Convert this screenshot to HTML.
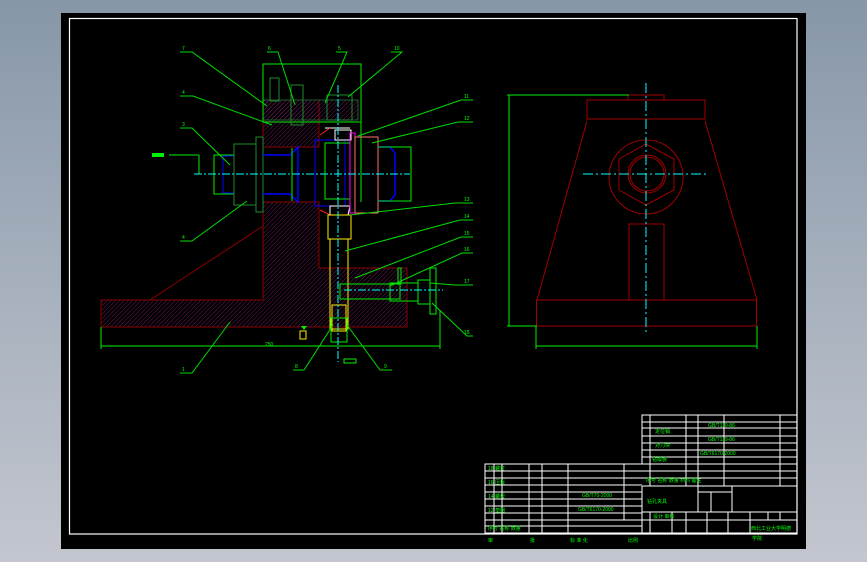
<!DOCTYPE html>
<html><head><meta charset="utf-8"><style>
html,body{margin:0;padding:0;}
body{width:867px;height:562px;overflow:hidden;background:linear-gradient(180deg,#8797a8 0%,#a6b0bd 50%,#c3c6ce 100%);}
svg{position:absolute;left:0;top:0;}
text{font-family:"Liberation Sans","Noto Sans CJK SC",sans-serif;fill:#00ff00;font-size:5px;}
</style></head><body>
<svg width="867" height="562" viewBox="0 0 867 562">
<defs>
<pattern id="h" width="3" height="3" patternUnits="userSpaceOnUse" patternTransform="rotate(45)">
<line x1="0" y1="0" x2="0" y2="3" stroke="#6a1a5a" stroke-width="1"/></pattern>
</defs>
<rect x="61" y="13" width="745" height="536" fill="#000"/>
<rect x="69.5" y="18.5" width="727.5" height="515.5" fill="none" stroke="#fff" stroke-width="1.2"/>

<!-- LEFT VIEW -->
<g fill="none" stroke-width="1">
<!-- hatched body -->
<path d="M101,300 H263 V202 H319 V268 H407 V327 H101 Z" fill="url(#h)" stroke="#8a0000"/>
<rect x="263" y="100" width="56" height="47" fill="url(#h)" stroke="#8a0000"/>
<rect x="263" y="100" width="95" height="20" fill="url(#h)" stroke="#1f5a2f"/>
<line x1="150" y1="300" x2="263" y2="226" stroke="#8a0000"/>
<line x1="263" y1="147" x2="319" y2="147" stroke="#8a0000"/>
<!-- green outline top -->
<rect x="263" y="64" width="98" height="58" stroke="#00ee00"/>
<line x1="361" y1="64" x2="361" y2="202" stroke="#00ee00"/>
<!-- left shaft parts -->
<rect x="214" y="155" width="20" height="39" stroke="#00ee00"/>
<rect x="223" y="156" width="11" height="37" stroke="#0000ff"/>
<rect x="234" y="144" width="22" height="61" stroke="#1f8a2f"/>
<rect x="256" y="137" width="7" height="75" stroke="#1f8a2f"/>
<path d="M263,155 H290 L298,147 V202 L290,194 H263" stroke="#0000ff" stroke-width="1.5"/>
<line x1="292" y1="148" x2="292" y2="201" stroke="#00ee00"/>
<path d="M315,140 H345 V206 H315 Z" stroke="#0000ff"/>
<rect x="325" y="143" width="25" height="56" stroke="#00ee00"/>
<path d="M335,130 H351 V140 H335 Z M325,128 H350" stroke="#ffffff"/>
<path d="M330,206 H350 L348,215 H330 Z" stroke="#ffffff"/>
<path d="M320,135 L330,128 M320,210 L330,215" stroke="#ff2020"/>
<rect x="350" y="133" width="5" height="80" stroke="#ff00ff"/>
<rect x="355" y="137" width="23" height="76" stroke="#ff7070"/>
<path d="M378,147 H390 L395,153 V195 L390,201 H378" stroke="#0000ff" stroke-width="1.5"/>
<path d="M378,147 H411 V201 H378" stroke="#00ee00"/>
<!-- vertical yellow stem -->
<rect x="328" y="215" width="23" height="24" stroke="#ffee00"/>
<rect x="330" y="239" width="18" height="90" stroke="#ffee00"/>
<rect x="332" y="305" width="14" height="26" stroke="#ffee00"/>
<rect x="331" y="318" width="16" height="24" stroke="#00ee00"/>
<!-- right horizontal parts -->
<rect x="340" y="284" width="60" height="15" stroke="#00ee00"/>
<rect x="390" y="283" width="28" height="18" stroke="#00ee00"/>
<rect x="418" y="280" width="12" height="24" stroke="#00ee00"/>
<rect x="430" y="268" width="6" height="46" stroke="#00ee00"/>
<rect x="398" y="268" width="3" height="16" stroke="#00ee00"/>
<!-- bolts -->
<rect x="270" y="78" width="9" height="23" stroke="#1f8a2f"/>
<rect x="291" y="85" width="12" height="40" stroke="#1f8a2f"/>
<rect x="327" y="95" width="25" height="25" stroke="#1f8a2f"/>
<!-- dimension -->
<line x1="101" y1="346" x2="440" y2="346" stroke="#00ee00"/>
<line x1="101" y1="327" x2="101" y2="349" stroke="#00ee00"/>
<line x1="440" y1="310" x2="440" y2="349" stroke="#00ee00"/>
<line x1="169" y1="155" x2="199" y2="155" stroke="#00ee00"/>
<line x1="199" y1="155" x2="199" y2="174" stroke="#00ee00"/>
<rect x="152" y="153" width="12" height="4" fill="#00ee00" stroke="none"/>
<!-- centerlines -->
<line x1="194" y1="174" x2="410" y2="174" stroke="#00ffff" stroke-dasharray="8,2,2,2"/>
<line x1="338" y1="85" x2="338" y2="362" stroke="#00ffff" stroke-dasharray="8,2,2,2"/>
<line x1="344" y1="290" x2="443" y2="290" stroke="#00ffff" stroke-dasharray="8,2,2,2"/>
<!-- leaders -->
<g stroke="#00dd00">
<path d="M180,52 H192 L267,106"/><path d="M267,52 H278 L295,105"/>
<path d="M336,52 H347 L325,103"/><path d="M391,52 H402 L348,97"/>
<path d="M180,96 H193 L272,125"/><path d="M180,128 H192 L230,165"/>
<path d="M180,241 H192 L247,201"/><path d="M473,100 H461 L358,136"/>
<path d="M473,122 H458 L372,143"/><path d="M473,203 H455 L350,215"/>
<path d="M473,220 H460 L345,251"/><path d="M473,237 H461 L355,278"/>
<path d="M473,253 H462 L390,286"/><path d="M473,285 H455 L430,283"/>
<path d="M473,336 H467 L432,303"/><path d="M180,373 H192 L230,322"/>
<path d="M293,370 H304 L333,325"/><path d="M392,370 H380 L347,325"/>
</g>
</g>
<g fill="#00ee00" font-size="5">
<text x="182" y="50">7</text><text x="268" y="50">6</text><text x="338" y="50">5</text><text x="394" y="50">10</text>
<text x="182" y="94">4</text><text x="182" y="126">3</text><text x="182" y="239">4</text>
<text x="464" y="98">11</text><text x="464" y="120">12</text><text x="464" y="201">13</text>
<text x="464" y="218">14</text><text x="464" y="235">15</text><text x="464" y="251">16</text>
<text x="464" y="283">17</text><text x="464" y="334">18</text>
<text x="182" y="371">1</text><text x="295" y="368">8</text><text x="384" y="368">9</text>
<text x="265" y="346">250</text>
</g>
<rect x="300" y="331" width="6" height="8" fill="none" stroke="#ffee00"/>
<path d="M301,326 H307 L304,330 Z" fill="#00ee00"/>
<rect x="344" y="359" width="12" height="4" fill="none" stroke="#00ee00"/>

<!-- RIGHT VIEW -->
<g fill="none" stroke="#a00000" stroke-width="1">
<rect x="628" y="95" width="36" height="5"/>
<rect x="587" y="100" width="118" height="19"/>
<path d="M587,121 L537,300 M705,121 L757,300"/>
<rect x="536.5" y="300" width="220" height="26"/>
<circle cx="646" cy="177" r="37"/>
<polygon points="646,144 674,159 674,190 646,205 619,190 619,159"/>
<circle cx="647" cy="174" r="19"/><circle cx="647" cy="174" r="17"/>
<rect x="629" y="224" width="35" height="76"/>
</g>
<g fill="none" stroke="#00ee00">
<path d="M507,95 H629 M509,95 V326 M507,326 H537 M536,326 V349 M757,326 V349 M536,346 H757"/>
</g>
<line x1="646" y1="83" x2="646" y2="335" stroke="#00ffff" stroke-dasharray="10,3,2,3"/>
<line x1="583" y1="174" x2="708" y2="174" stroke="#00ffff" stroke-dasharray="10,3,2,3"/>

<!-- TITLE BLOCK -->
<g fill="none" stroke="#fff" stroke-width="1">
<path d="M642,415 H797 V533 H485 V464 H642 Z"/>
<path d="M642,422H797M642,428H797M642,436H797M642,443H797M642,450H797M642,457H797M642,464H797M642,471H797M642,478H797M642,486H797"/>
<path d="M650,415V486M686,415V486M698,415V486M724,415V486M780,415V486"/>
<path d="M485,471H642M485,478H642M485,485H642M485,492H642M485,499H642M485,506H642M485,513H642M485,520H642M485,526H642"/>
<path d="M494,464V533M502,464V533M529,464V533M542,464V533M568,464V533M624,464V520"/>
<path d="M642,486V533M698,486V512M711,492V512M732,486V512M698,492H732M642,512H797M642,520H797"/>
<path d="M650,512V533M672,512V533M686,512V533M707,512V533M728,512V533M750,512V533M768,512V520M780,512V520"/>
</g>
<g fill="#00ee00" font-size="5">
<text x="708" y="427">GB/T119-86</text><text x="708" y="441">GB/T119-86</text><text x="700" y="455">GB/T6170-2000</text>
<text x="582" y="497">GB/T70-2000</text><text x="578" y="511">GB/T6170-2000</text>
<text x="655" y="433">定位销</text><text x="655" y="447">对刀块</text><text x="652" y="461">钻模板</text>
<text x="646" y="482">序号 名称 数量 材料 备注</text>
<text x="647" y="503" font-size="11">钻孔夹具</text>
<text x="751" y="530">西北工业大学明德</text>
<text x="653" y="518">设计 审核</text>
<text x="488" y="470">18 螺钉</text><text x="488" y="484">16 压板</text><text x="488" y="498">14 螺母</text><text x="488" y="512">12 垫圈</text><text x="488" y="530">序号 名称 数量</text>
<text x="488" y="542">审</text><text x="530" y="542">批</text><text x="570" y="542">标 准 化</text><text x="628" y="542">比例</text><text x="752" y="540">学院</text>
</g>
</svg>
</body></html>
